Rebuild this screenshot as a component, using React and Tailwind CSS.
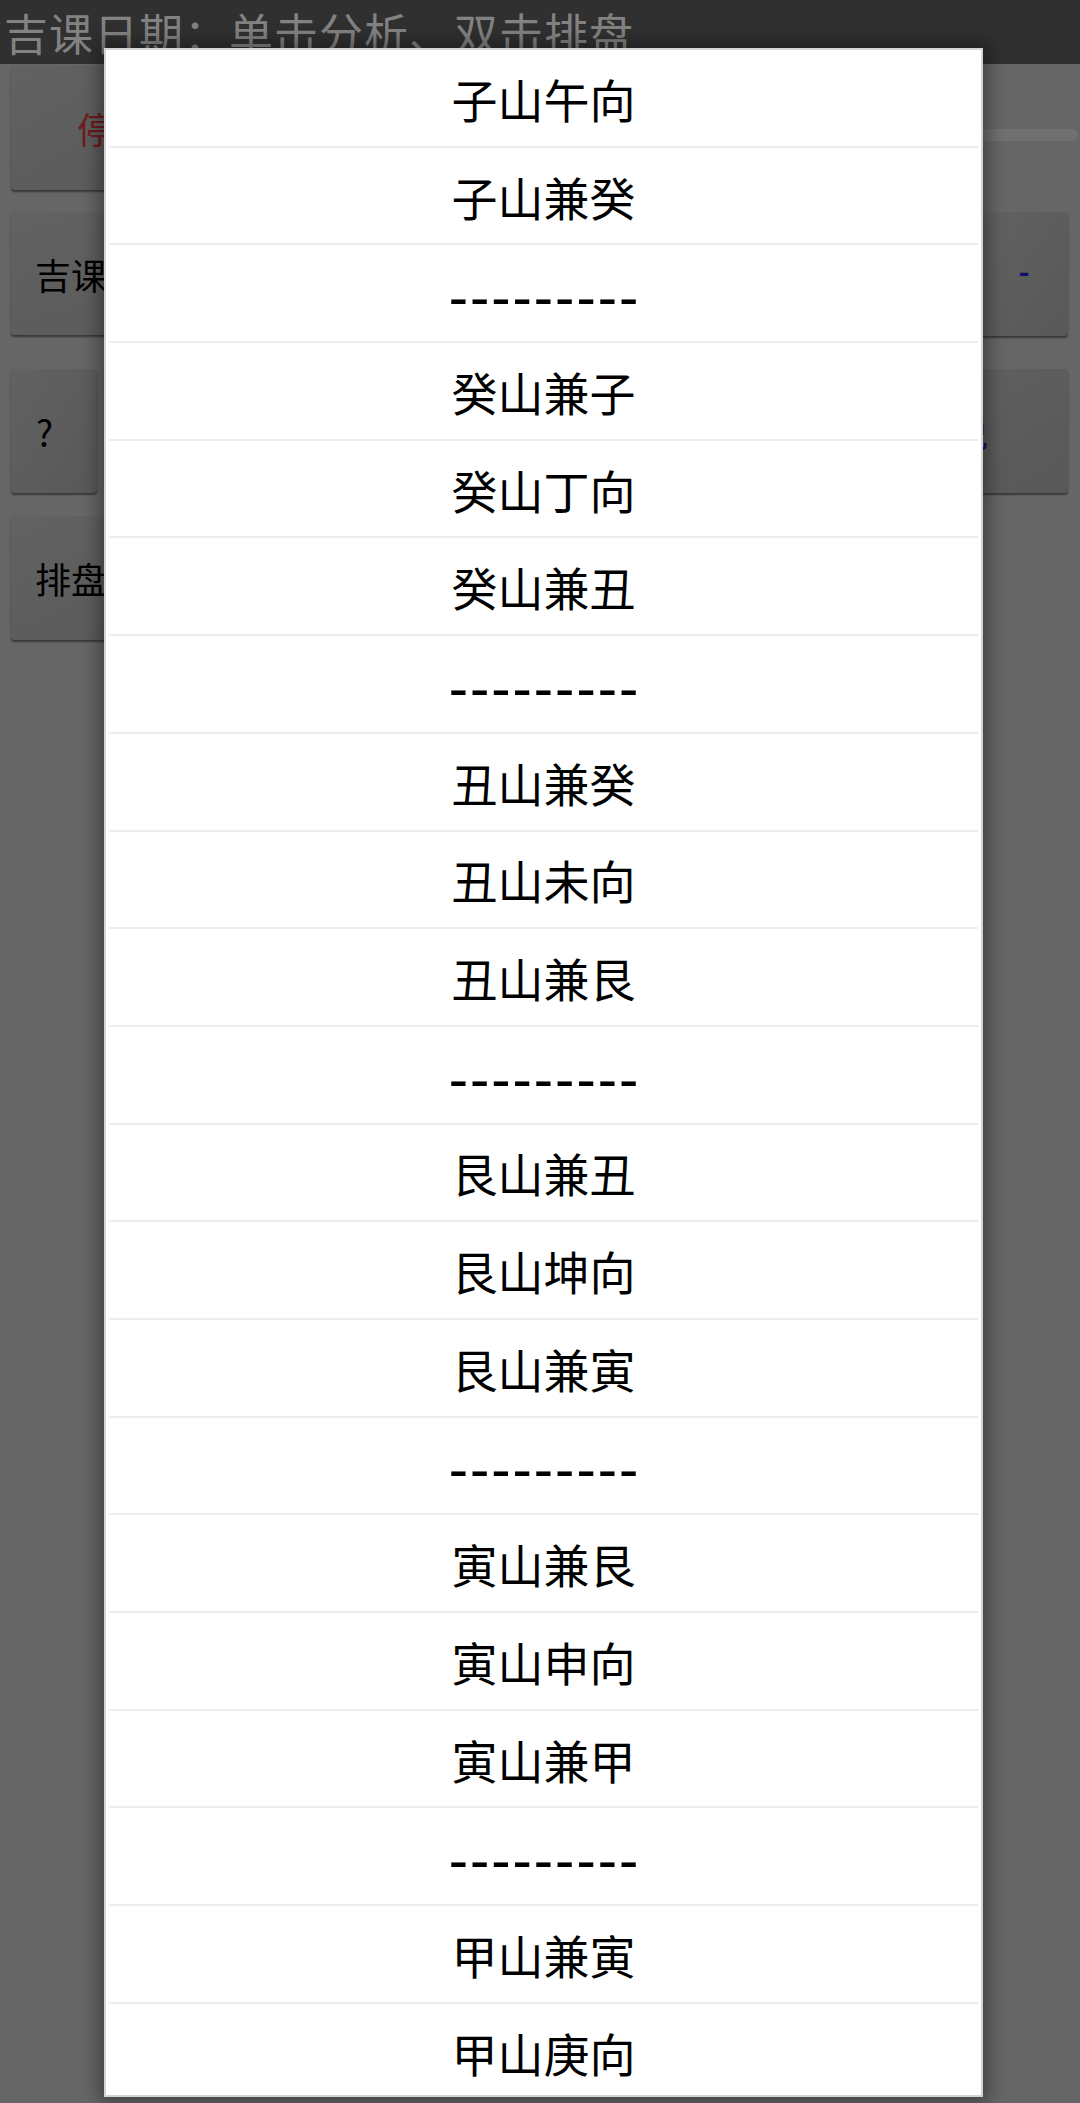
import React from 'react'

const items = [
  '子山午向', '子山兼癸', '---------',
  '癸山兼子', '癸山丁向', '癸山兼丑', '---------',
  '丑山兼癸', '丑山未向', '丑山兼艮', '---------',
  '艮山兼丑', '艮山坤向', '艮山兼寅', '---------',
  '寅山兼艮', '寅山申向', '寅山兼甲', '---------',
  '甲山兼寅', '甲山庚向'
]

const cjk = { fontFamily: '"Noto Sans CJK SC", "Noto Sans", sans-serif' }

function BgButton({ className = '', children }) {
  return (
    <div className={`rounded-[4px] bg-[#5d5d5d] bg-gradient-to-br from-[#626262] to-[#585858] shadow-[0_2px_2px_rgba(0,0,0,0.45)] flex items-center ${className}`}>
      {children}
    </div>
  )
}

function Row({ text }) {
  const dash = text.startsWith('-')
  return (
    <div className="h-[97.7px] shrink-0 mx-[3px] border-b-2 border-[#ededed] flex items-center justify-center">
      {dash ? (
        <span className="text-[54px] leading-none text-black font-medium tracking-[2px] mr-[-2px] translate-y-[1px]">{text}</span>
      ) : (
        <span className="text-[46px] leading-none text-black">{text}</span>
      )}
    </div>
  )
}

export default function App() {
  return (
    <div className="relative w-[1080px] h-[2103px] bg-[#666666] overflow-hidden" style={cjk}>
      <div className="h-[64px] bg-[#303030] flex items-center pl-[4px]">
        <div className="text-[44px] leading-none text-[#828282] tracking-[1px]">吉课日期：单击分析、双击排盘</div>
      </div>

      <div className="flex flex-col pl-[11px] pr-[12px] pt-[1px]">
        <div className="h-[125px] flex items-center gap-[20px]">
          <BgButton className="w-[220px] h-[125px] pl-[66px]">
            <span className="text-[36px] text-[#6e1c1c]">停止</span>
          </BgButton>
          <div className="flex-1 h-[12px] mt-[14px] mr-[-10px] rounded-full bg-[#707070]" />
        </div>

        <div className="h-[125px] mt-[21px] flex items-center justify-between">
          <BgButton className="w-[400px] h-[123px] pl-[24px]">
            <span className="text-[36px] text-black">吉课日期</span>
          </BgButton>
          <BgButton className="w-[88px] h-[124px] justify-center">
            <span className="text-[30px] font-bold text-[#10106a] -mt-[6px]">-</span>
          </BgButton>
        </div>

        <div className="h-[124px] mt-[33px] flex items-center justify-between">
          <BgButton className="w-[86px] h-[124px] pl-[25px]">
            <span className="text-[36px] text-black">?</span>
          </BgButton>
          <BgButton className="w-[200px] h-[124px] pl-[48px]">
            <span className="text-[36px] text-[#10106a]">解说</span>
          </BgButton>
        </div>

        <div className="h-[124px] mt-[23px] flex items-center">
          <BgButton className="w-[300px] h-[124px] pl-[24px]">
            <span className="text-[36px] text-black">排盘</span>
          </BgButton>
        </div>
      </div>

      <div className="absolute left-[104px] top-[48px] w-[879px] h-[2049px] bg-white border-2 border-[#d4d4d4] shadow-[0_0_16px_6px_rgba(0,0,0,0.35)] overflow-hidden flex flex-col">
        {items.map((t, i) => (
          <Row key={i} text={t} />
        ))}
      </div>
    </div>
  )
}
